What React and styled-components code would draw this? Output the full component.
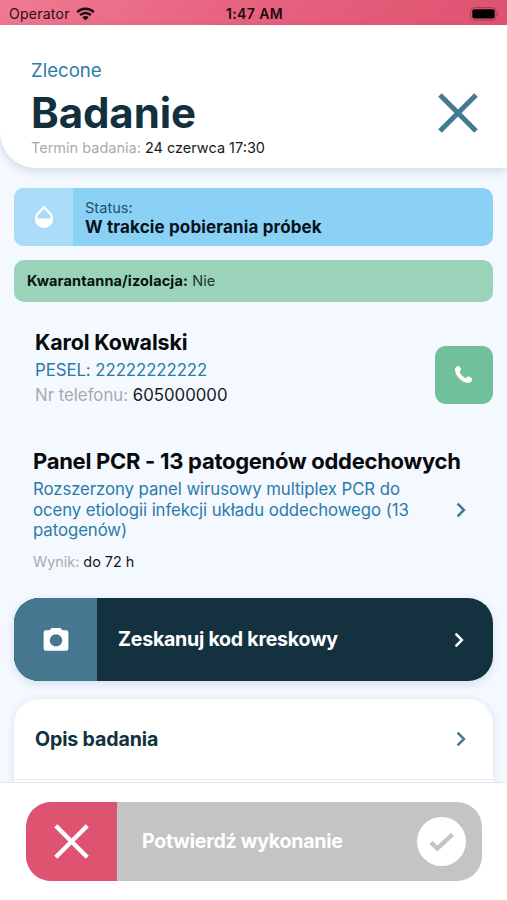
import React from "react";
import styled, { createGlobalStyle } from "styled-components";

const GlobalStyle = createGlobalStyle`
  * {
    box-sizing: border-box;
  }
  body {
    margin: 0;
    background: #f4f8ff;
    font-family: Inter, "Liberation Sans", sans-serif;
    overflow: hidden;
  }
`;

function Cross({ size, color, stroke }) {
  return (
    <svg width={size} height={size} viewBox="0 0 40 40">
      <path d="M2 2L38 38M38 2L2 38" stroke={color} strokeWidth={stroke} />
    </svg>
  );
}

function Chevron({ color }) {
  return (
    <svg width="10" height="16" viewBox="0 0 10 16" fill="none">
      <path d="M1.6 1.7L7.9 8L1.6 14.3" stroke={color} strokeWidth="2.5" />
    </svg>
  );
}

function App() {
  return (
    <Screen>
      <GlobalStyle />
      <StatusBar>
        <Operator>
          <Text $size={14} $spacing={0.25} $color="#2a0d14">
            Operator
          </Text>
          <svg width="19" height="14" viewBox="0 0 19 14">
            <path
              d="M1.2 5.1a11.8 11.8 0 0 1 16.6 0M4.1 8.2a7.7 7.7 0 0 1 10.8 0"
              fill="none"
              stroke="#1d090e"
              strokeWidth="2.5"
            />
            <path d="M9.5 13.4L6.3 10.2a4.6 4.6 0 0 1 6.4 0z" fill="#1d090e" />
          </svg>
        </Operator>
        <Text $size={14} $weight={600} $spacing={0.4} $color="#1d090e">
          1:47 AM
        </Text>
        <Battery>
          <svg width="30" height="14" viewBox="0 0 30 14">
            <rect
              x="0.6"
              y="0.6"
              width="25.6"
              height="12.6"
              rx="3.8"
              fill="none"
              stroke="#a83c54"
            />
            <rect x="2.3" y="2.3" width="22.4" height="9.2" rx="2" />
            <path d="M27.6 4.8q2 2.1 0 4.2z" fill="#a83c54" />
          </svg>
        </Battery>
      </StatusBar>

      <Header>
        <div>
          <Text $size={18.6} $line={24} $color="#2b7ba8">
            Zlecone
          </Text>
          <Title>Badanie</Title>
          <Text $size={14.5} $line={18} $color="#16181b">
            <Muted>Termin badania:</Muted> 24 czerwca 17:30
          </Text>
        </div>
        <Cross size={40} color="#437a92" stroke={5} />
      </Header>

      <Content>
        <Status>
          <StatusIcon>
            <svg width="20" height="24" viewBox="0 0 20 24">
              <path d="M10 0.5L16.6 7.4a9.2 9.2 0 1 1-13.2 0z" fill="#fff" />
              <path
                d="M3.2 13.6h13.6c0-2.1-.8-3.7-2-4.9L10 3.8 5.2 8.7c-1.2 1.2-2 2.8-2 4.9z"
                fill="#aadcf7"
              />
            </svg>
          </StatusIcon>
          <div>
            <Text $size={14.6} $line={19} $color="#21506a">
              Status:
            </Text>
            <Text
              $size={17}
              $line={18}
              $weight={700}
              $spacing={0.13}
              $color="#07131a"
            >
              W trakcie pobierania próbek
            </Text>
          </div>
        </Status>

        <Quarantine>
          <Text $size={14.5} $spacing={0.13} $color="#20352c">
            <Strong>Kwarantanna/izolacja:</Strong> Nie
          </Text>
        </Quarantine>

        <Patient>
          <div>
            <Text $size={21.4} $line={26} $weight={700} $spacing={-0.1}>
              Karol Kowalski
            </Text>
            <PatientLine $size={16.8} $line={25} $spacing={-0.06} $color="#2b7ba8">
              PESEL: 22222222222
            </PatientLine>
            <Text $size={16.8} $line={24} $color="#16181b">
              <Muted>Nr telefonu:</Muted> 605000000
            </Text>
          </div>
          <CallButton>
            <svg width="20" height="20" viewBox="0 0 20 20">
              <path
                d="M3 1.4C4.6.4 6 1.5 6.8 3.5c.6 1.5 0 2.2-1 2.8-.4.3-.4.7-.1 1.3 1.2 2.2 3 4.2 5.3 5.4.6.3 1 .2 1.3-.3.7-1.2 1.7-1.4 2.9-.9 1.9.7 3.6 1.7 2.9 3.4-.8 2-3 3-5.5 2.5C6.8 16.5 1.4 10.5 1 4.8.9 3.2 1.8 2.1 3 1.4z"
                fill="#fff"
              />
            </svg>
          </CallButton>
        </Patient>

        <Panel>
          <Text $size={22} $line={28} $weight={700} $spacing={-0.28}>
            Panel PCR - 13 patogenów oddechowych
          </Text>
          <PanelRow>
            <Text $size={16.8} $line={20.7} $spacing={-0.08} $color="#2b7ba8">
              Rozszerzony panel wirusowy multiplex PCR do
              <br />
              oceny etiologii infekcji układu oddechowego (13
              <br />
              patogenów)
            </Text>
            <Chevron color="#437a92" />
          </PanelRow>
          <Text $size={14.4} $line={18} $color="#16181b">
            <Muted>Wynik:</Muted> do 72 h
          </Text>
        </Panel>

        <ScanButton>
          <ScanIcon>
            <svg width="26" height="24" viewBox="0 0 26 24">
              <path
                d="M8.6 1h8.8l2.2 2.3h3.6a2.2 2.2 0 0 1 2.2 2.2v16a2.2 2.2 0 0 1-2.2 2.2H2.8a2.2 2.2 0 0 1-2.2-2.2v-16a2.2 2.2 0 0 1 2.2-2.2h3.6z"
                fill="#fff"
              />
              <circle cx="13" cy="13.4" r="6.2" fill="#45788f" />
            </svg>
          </ScanIcon>
          <Text $size={19.6} $weight={700} $spacing={-0.26} $color="#fff">
            Zeskanuj kod kreskowy
          </Text>
          <Chevron color="#fff" />
        </ScanButton>

        <Card>
          <CardRow>
            <Text $size={19.6} $weight={700} $spacing={-0.15} $color="#12303d">
              Opis badania
            </Text>
            <Chevron color="#437a92" />
          </CardRow>
        </Card>
      </Content>

      <Footer>
        <Confirm>
          <Reject>
            <Cross size={35} color="#fff" stroke={5} />
          </Reject>
          <Text $size={19.6} $weight={700} $spacing={-0.26} $color="#fff">
            Potwierdź wykonanie
          </Text>
          <Check>
            <svg width="26" height="20" viewBox="0 0 26 20" fill="none">
              <path
                d="M2 10.4L8.3 16.6L23.5 2.4"
                stroke="#c4c4c4"
                strokeWidth="4.3"
              />
            </svg>
          </Check>
        </Confirm>
      </Footer>
    </Screen>
  );
}

const Screen = styled.div`
  display: flex;
  flex-direction: column;
  width: 507px;
  height: 900px;
  overflow: hidden;
  background: #f4f8ff;

  svg {
    display: block;
    flex-shrink: 0;
  }
`;

const Text = styled.div`
  font-size: ${(p) => p.$size}px;
  font-weight: ${(p) => p.$weight || 400};
  line-height: ${(p) => (p.$line ? `${p.$line}px` : "1.2")};
  letter-spacing: ${(p) => p.$spacing || 0}px;
  color: ${(p) => p.$color || "#08090b"};
  white-space: nowrap;
`;

const Muted = styled.span`
  color: #a9abae;
`;

const Strong = styled.span`
  font-weight: 700;
  color: #07130d;
`;

const StatusBar = styled.div`
  display: grid;
  grid-template-columns: 1fr auto 1fr;
  align-items: center;
  height: 25px;
  padding: 3px 7px 0 9px;
  flex-shrink: 0;
  background: linear-gradient(135deg, #f07a93 0%, #e8637f 45%, #de5270 100%);
`;

const Operator = styled.div`
  display: flex;
  align-items: center;
  gap: 6px;
`;

const Battery = styled.div`
  display: flex;
  justify-content: flex-end;
`;

const Header = styled.div`
  display: flex;
  justify-content: space-between;
  height: 143px;
  flex-shrink: 0;
  padding: 33px 29px 0 31px;
  background: #fff;
  border-bottom-left-radius: 36px;
  box-shadow: 0 3px 9px rgba(50, 90, 120, 0.18);

  > svg {
    margin-top: 35px;
  }
`;

const Title = styled.h1`
  margin: 4px 0 0;
  font-size: 42px;
  line-height: 53px;
  font-weight: 700;
  letter-spacing: -0.1px;
  color: #12303d;
`;

const Content = styled.div`
  flex: 1;
  display: flex;
  flex-direction: column;
  min-height: 0;
  padding: 20px 14px 0;
`;

const Status = styled.div`
  display: flex;
  align-items: center;
  height: 58px;
  flex-shrink: 0;
  border-radius: 10px;
  overflow: hidden;
  background: #8bd0f5;
`;

const StatusIcon = styled.div`
  display: flex;
  align-items: center;
  justify-content: center;
  width: 59px;
  height: 100%;
  margin-right: 12px;
  background: #aadcf7;
`;

const Quarantine = styled.div`
  display: flex;
  align-items: center;
  height: 42px;
  flex-shrink: 0;
  margin-top: 14px;
  padding-left: 13px;
  border-radius: 10px;
  background: #9ad2ba;
`;

const Patient = styled.div`
  display: flex;
  justify-content: space-between;
  margin-top: 27px;
  padding-left: 21px;
`;

const PatientLine = styled(Text)`
  margin-top: 3px;
`;

const CallButton = styled.div`
  display: flex;
  align-items: center;
  justify-content: center;
  width: 58px;
  height: 58px;
  margin-top: 17px;
  border-radius: 11px;
  background: #70c09b;
`;

const Panel = styled.div`
  margin-top: 40px;
  padding-left: 19px;
`;

const PanelRow = styled.div`
  display: flex;
  align-items: center;
  justify-content: space-between;
  margin: 4px 27px 12px 0;
`;

const ScanButton = styled.div`
  display: flex;
  align-items: center;
  height: 83px;
  flex-shrink: 0;
  margin-top: 27px;
  padding-right: 29px;
  border-radius: 25px;
  overflow: hidden;
  background: #13313f;
  box-shadow: 0 3px 9px rgba(50, 90, 120, 0.15);

  > svg {
    margin-left: auto;
  }
`;

const ScanIcon = styled.div`
  display: flex;
  align-items: center;
  justify-content: center;
  width: 83px;
  height: 100%;
  margin-right: 21px;
  padding-bottom: 2px;
  background: #45788f;
`;

const Card = styled.div`
  margin-top: 18px;
  height: 120px;
  flex-shrink: 0;
  border-radius: 25px;
  background: #fff;
  box-shadow: 0 1px 8px rgba(50, 90, 120, 0.12);
`;

const CardRow = styled.div`
  display: flex;
  align-items: center;
  justify-content: space-between;
  height: 81px;
  padding: 0 27px 0 21px;
  border-bottom: 1px solid #e0e8ef;

  > ${Text} {
    padding-top: 2px;
  }
`;

const Footer = styled.div`
  z-index: 1;
  height: 118px;
  flex-shrink: 0;
  padding: 19px 25px 0 26px;
  background: #fff;
  border-top: 1px solid #e1e8ed;
`;

const Confirm = styled.div`
  display: flex;
  align-items: center;
  height: 79px;
  padding-right: 16px;
  border-radius: 25px;
  overflow: hidden;
  background: #c4c4c4;
`;

const Reject = styled.div`
  display: flex;
  align-items: center;
  justify-content: center;
  width: 91px;
  height: 100%;
  margin-right: 25px;
  background: #de5370;
`;

const Check = styled.div`
  display: flex;
  align-items: center;
  justify-content: center;
  width: 49px;
  height: 49px;
  margin-left: auto;
  border-radius: 50%;
  background: #fff;
`;

export default App;
